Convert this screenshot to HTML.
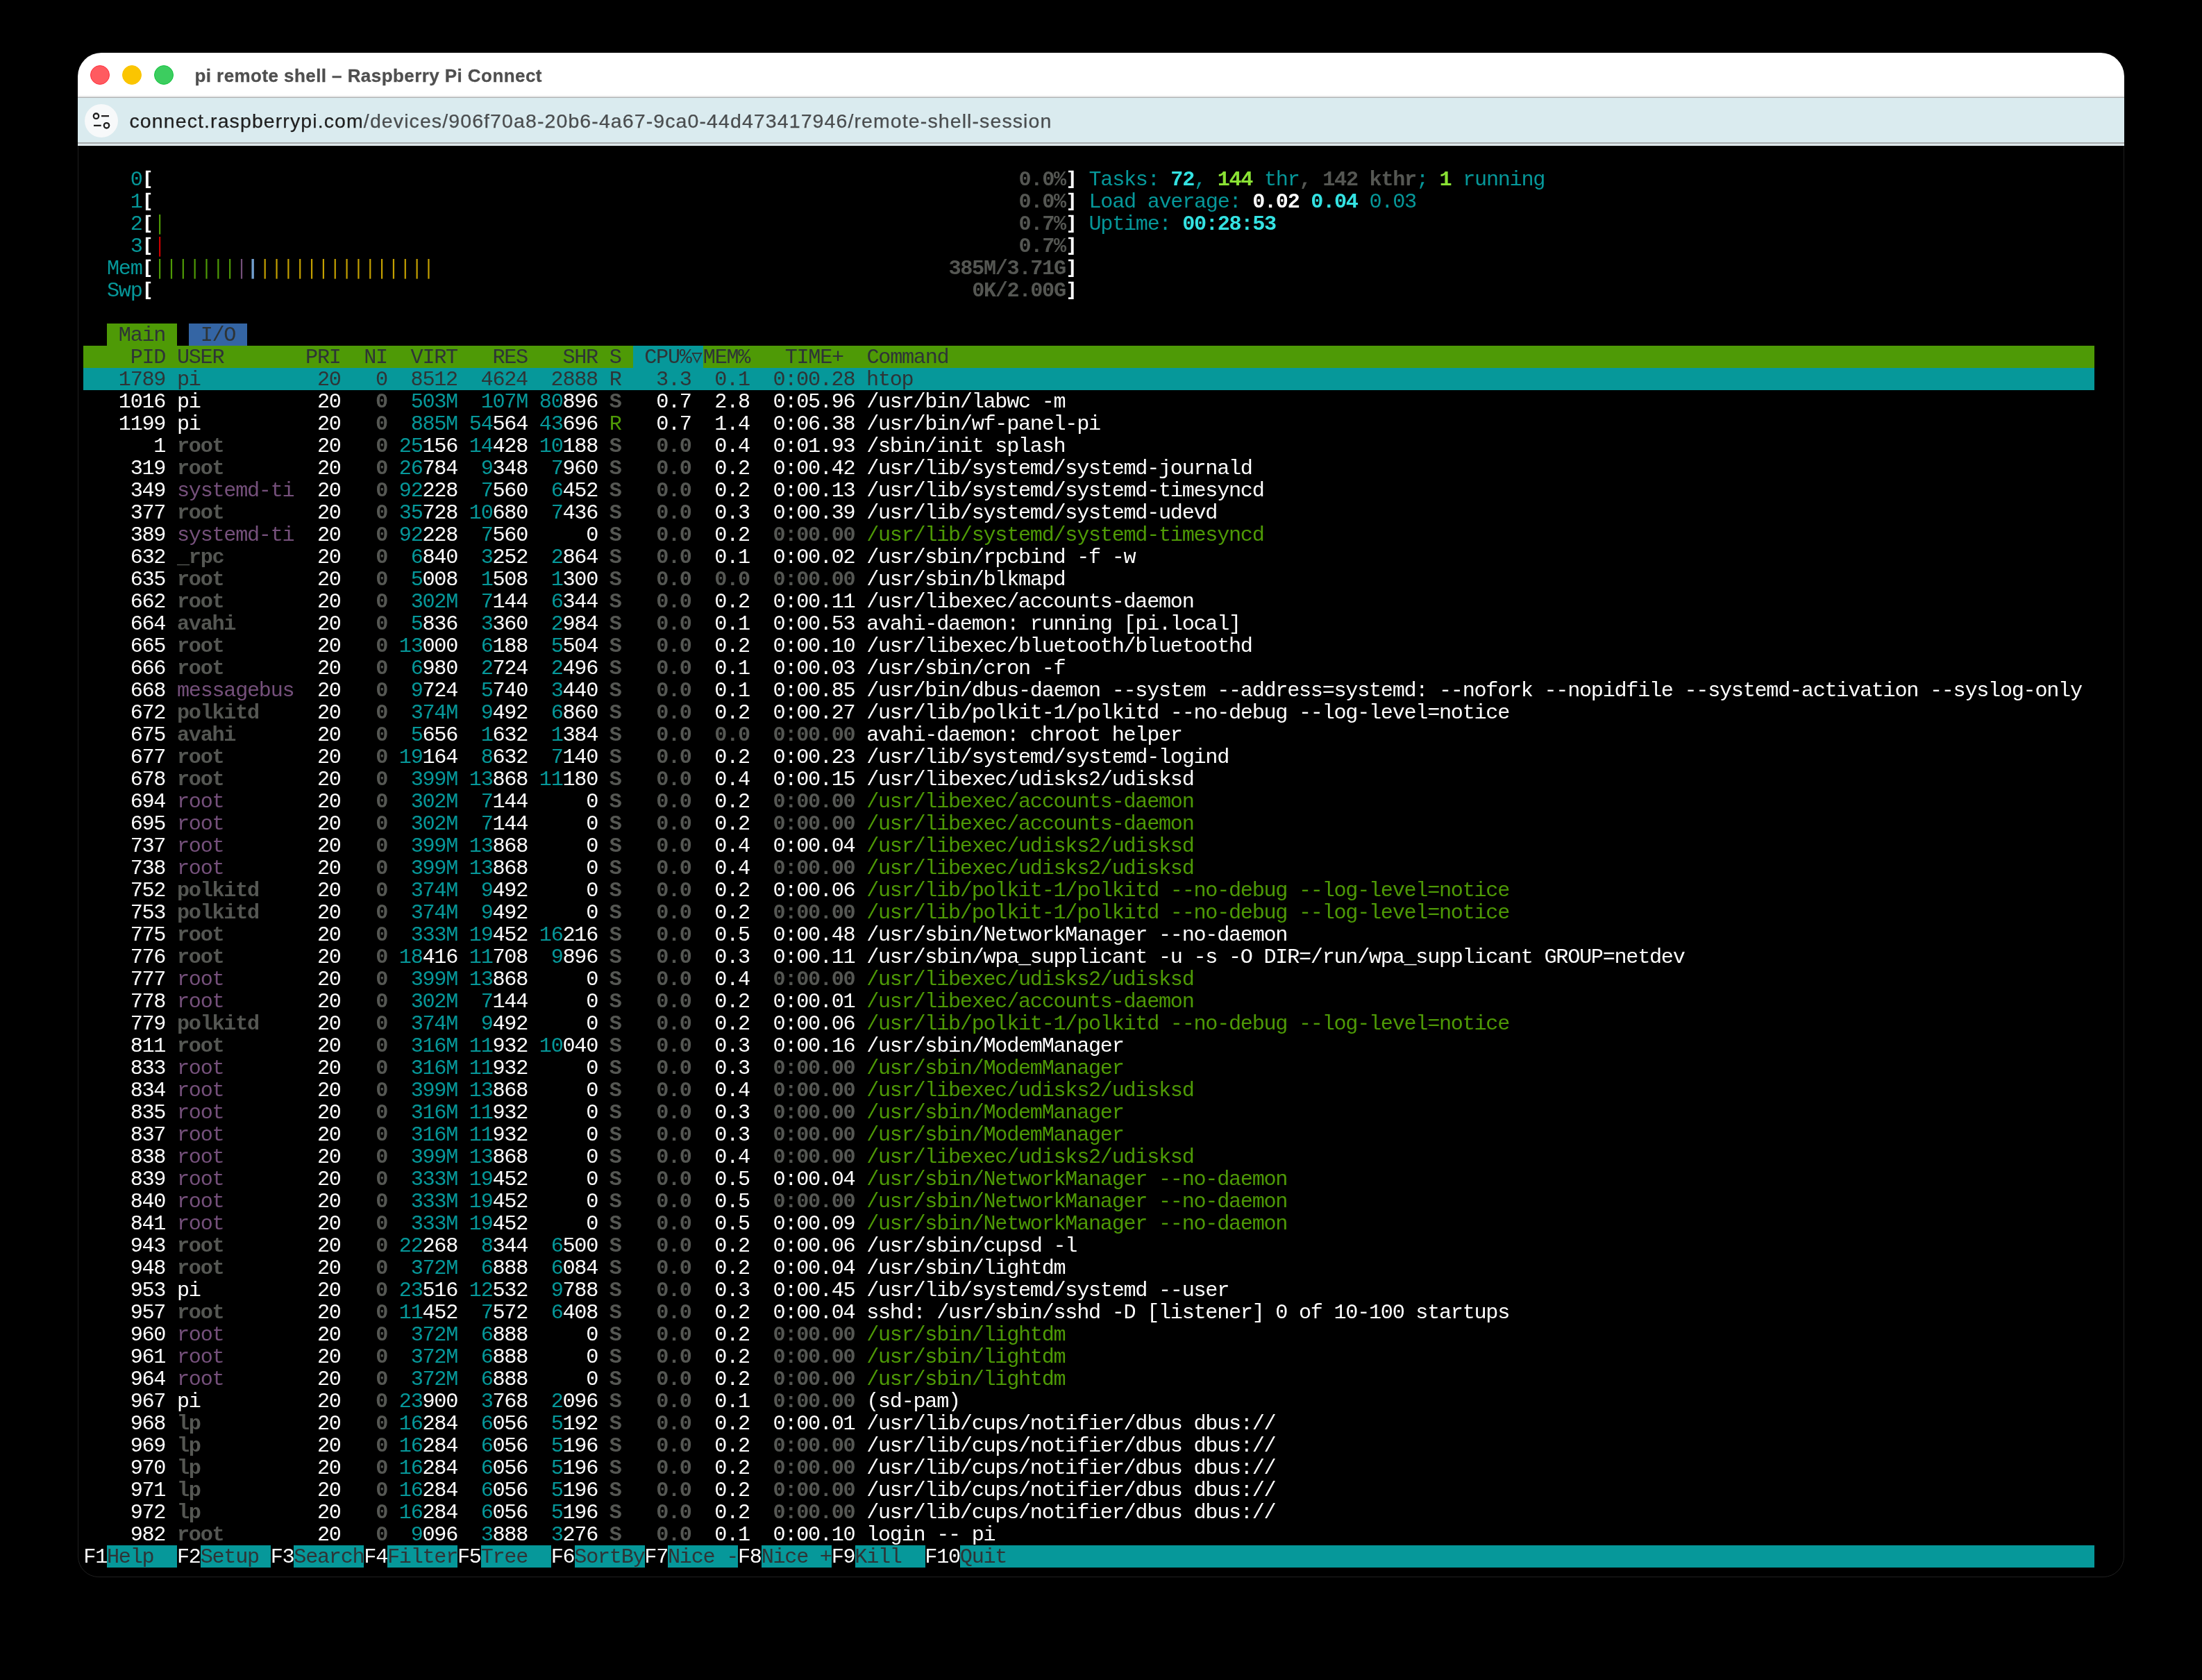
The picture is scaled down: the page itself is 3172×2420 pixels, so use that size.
<!DOCTYPE html>
<html lang="en">
<head>
<meta charset="utf-8">
<title>pi remote shell – Raspberry Pi Connect</title>
<style>
html,body{margin:0;padding:0;background:#000;}
body{width:3172px;height:2420px;position:relative;overflow:hidden;font-family:"Liberation Sans",sans-serif;}
#win{will-change:transform;position:absolute;left:112px;top:76px;width:2948px;height:2195px;border-radius:34px 34px 30px 30px;overflow:hidden;background:#000;}
#frame{position:absolute;left:112px;top:76px;width:2946px;height:2194px;border:1px solid #202020;border-radius:34px 34px 30px 30px;pointer-events:none;clip-path:inset(134px 0 0 0);}
#tb{position:absolute;left:0;top:0;width:100%;height:62px;background:#fff;}
#tbl1{position:absolute;left:0;top:62px;width:100%;height:2px;background:#e6e6e6;}
#tbl2{position:absolute;left:0;top:64px;width:100%;height:1px;background:#a9acad;}
#ub{position:absolute;left:0;top:65px;width:100%;height:64px;background:#daebef;}
#ubl1{position:absolute;left:0;top:129px;width:100%;height:2px;background:#a8aaab;}
#ubl2{position:absolute;left:0;top:131px;width:100%;height:3px;background:linear-gradient(#dcecf0 0 33%,#dde4e6 33% 67%,#e9f2f5 67%);}
.tl{position:absolute;top:17.5px;width:28.5px;height:28.5px;border-radius:50%;box-sizing:border-box;}
#title{position:absolute;left:168.5px;top:15px;height:36px;line-height:36px;font-size:26px;font-weight:bold;color:#4f4f4f;white-space:pre;letter-spacing:0.43px;-webkit-text-stroke:0.3px;}
#ic{position:absolute;left:10px;top:73.5px;width:48px;height:48px;border-radius:50%;background:#f7f9fa;}
#url{position:absolute;left:74.5px;top:78px;height:40px;line-height:40px;font-size:28.5px;color:#4a4d4f;white-space:pre;letter-spacing:1.1px;-webkit-text-stroke:0.25px;}
#url b{font-weight:normal;color:#1f1f1f;}
.r{position:absolute;height:32px;line-height:32px;white-space:pre;font-family:"Liberation Mono",monospace;font-size:30.2px;letter-spacing:-1.2829px;color:#fff;font-kerning:none;font-variant-ligatures:none;}
#term{position:absolute;left:0;top:0;width:3172px;height:2420px;will-change:transform;}
.bg{position:absolute;height:32px;}
.bar{position:absolute;height:28px;}
.tri{position:absolute;}
.c{color:#06989a}
.bc{color:#34e2e2;font-weight:bold}
.bg_{color:#8ae234;font-weight:bold}
.bk{color:#555753;font-weight:bold}
.bw{color:#fff;font-weight:bold}
.d{color:#2e3436}
.m{color:#75507b}
.g{color:#4e9a06}
</style>
</head>
<body>
<div id="win">
<div id="tb"></div><div id="tbl1"></div><div id="tbl2"></div>
<div id="ub"></div><div id="ubl1"></div><div id="ubl2"></div>
<div class="tl" style="left:17.5px;background:#ff5b60;border:1.3px solid #ff2e3e"></div>
<div class="tl" style="left:63.5px;background:#fbc501;border:1.3px solid #fac400"></div>
<div class="tl" style="left:109.5px;background:#3ccd5f;border:1.3px solid #12c43f"></div>
<div id="title">pi remote shell – Raspberry Pi Connect</div>
<div id="ic"><svg width="48" height="48" viewBox="0 0 48 48"><g fill="none" stroke="#1f1f1f" stroke-width="2.3"><circle cx="16.5" cy="17.2" r="3.7"/><circle cx="31.5" cy="30.8" r="3.7"/><path d="M24 17.2H35M13 30.8H23.7"/></g></svg></div>
<div id="url"><b>connect.raspberrypi.com</b>/devices/906f70a8-20b6-4a67-9ca0-44d473417946/remote-shell-session</div>
</div>
<div id="frame"></div>
<div id="term">
<div class="r" style="left:120.30px;top:243px"><span class="c">    0</span></div>
<svg class="tri" style="left:204px;top:242px" width="18" height="32"><path d="M5.90 3.7H13.20V6.3H9.80V26.3H13.20V28.9H5.90Z" fill="#fff"/></svg>
<div class="r" style="left:1467.50px;top:243px"><span class="bk">0.0%</span></div>
<svg class="tri" style="left:1534px;top:242px" width="18" height="32"><path d="M12.66 3.7H4.96V6.3H8.76V26.3H4.96V28.9H12.66Z" fill="#fff"/></svg>
<div class="r" style="left:120.30px;top:275px"><span class="c">    1</span></div>
<svg class="tri" style="left:204px;top:274px" width="18" height="32"><path d="M5.90 3.7H13.20V6.3H9.80V26.3H13.20V28.9H5.90Z" fill="#fff"/></svg>
<div class="r" style="left:1467.50px;top:275px"><span class="bk">0.0%</span></div>
<svg class="tri" style="left:1534px;top:274px" width="18" height="32"><path d="M12.66 3.7H4.96V6.3H8.76V26.3H4.96V28.9H12.66Z" fill="#fff"/></svg>
<div class="r" style="left:120.30px;top:307px"><span class="c">    2</span></div>
<svg class="tri" style="left:204px;top:306px" width="18" height="32"><path d="M5.90 3.7H13.20V6.3H9.80V26.3H13.20V28.9H5.90Z" fill="#fff"/></svg>
<svg class="tri" style="left:221px;top:306px" width="20" height="32"><rect x="8.04" y="3" width="2.2" height="28.6" fill="#4e9a06"/></svg>
<div class="r" style="left:1467.50px;top:307px"><span class="bk">0.7%</span></div>
<svg class="tri" style="left:1534px;top:306px" width="18" height="32"><path d="M12.66 3.7H4.96V6.3H8.76V26.3H4.96V28.9H12.66Z" fill="#fff"/></svg>
<div class="r" style="left:120.30px;top:339px"><span class="c">    3</span></div>
<svg class="tri" style="left:204px;top:338px" width="18" height="32"><path d="M5.90 3.7H13.20V6.3H9.80V26.3H13.20V28.9H5.90Z" fill="#fff"/></svg>
<svg class="tri" style="left:221px;top:338px" width="20" height="32"><rect x="8.04" y="3" width="2.2" height="28.6" fill="#cc0000"/></svg>
<div class="r" style="left:1467.50px;top:339px"><span class="bk">0.7%</span></div>
<svg class="tri" style="left:1534px;top:338px" width="18" height="32"><path d="M12.66 3.7H4.96V6.3H8.76V26.3H4.96V28.9H12.66Z" fill="#fff"/></svg>
<div class="r" style="left:120.30px;top:371px"><span class="c">  Mem</span></div>
<svg class="tri" style="left:204px;top:370px" width="18" height="32"><path d="M5.90 3.7H13.20V6.3H9.80V26.3H13.20V28.9H5.90Z" fill="#fff"/></svg>
<svg class="tri" style="left:221px;top:370px" width="408" height="32"><rect x="8.04" y="3" width="2.2" height="28.6" fill="#4e9a06"/><rect x="24.88" y="3" width="2.2" height="28.6" fill="#4e9a06"/><rect x="41.72" y="3" width="2.2" height="28.6" fill="#4e9a06"/><rect x="58.56" y="3" width="2.2" height="28.6" fill="#4e9a06"/><rect x="75.40" y="3" width="2.2" height="28.6" fill="#4e9a06"/><rect x="92.24" y="3" width="2.2" height="28.6" fill="#4e9a06"/><rect x="109.08" y="3" width="2.2" height="28.6" fill="#4e9a06"/><rect x="125.92" y="3" width="2.2" height="28.6" fill="#75507b"/><rect x="141.46" y="3" width="3.4" height="28.6" fill="#729fcf"/><rect x="159.60" y="3" width="2.2" height="28.6" fill="#c4a000"/><rect x="176.44" y="3" width="2.2" height="28.6" fill="#c4a000"/><rect x="193.28" y="3" width="2.2" height="28.6" fill="#c4a000"/><rect x="210.12" y="3" width="2.2" height="28.6" fill="#c4a000"/><rect x="226.96" y="3" width="2.2" height="28.6" fill="#c4a000"/><rect x="243.80" y="3" width="2.2" height="28.6" fill="#c4a000"/><rect x="260.64" y="3" width="2.2" height="28.6" fill="#c4a000"/><rect x="277.48" y="3" width="2.2" height="28.6" fill="#c4a000"/><rect x="294.32" y="3" width="2.2" height="28.6" fill="#c4a000"/><rect x="311.16" y="3" width="2.2" height="28.6" fill="#c4a000"/><rect x="328.00" y="3" width="2.2" height="28.6" fill="#c4a000"/><rect x="344.84" y="3" width="2.2" height="28.6" fill="#c4a000"/><rect x="361.68" y="3" width="2.2" height="28.6" fill="#c4a000"/><rect x="378.52" y="3" width="2.2" height="28.6" fill="#c4a000"/><rect x="395.36" y="3" width="2.2" height="28.6" fill="#c4a000"/></svg>
<div class="r" style="left:1366.46px;top:371px"><span class="bk">385M/3.71G</span></div>
<svg class="tri" style="left:1534px;top:370px" width="18" height="32"><path d="M12.66 3.7H4.96V6.3H8.76V26.3H4.96V28.9H12.66Z" fill="#fff"/></svg>
<div class="r" style="left:120.30px;top:403px"><span class="c">  Swp</span></div>
<svg class="tri" style="left:204px;top:402px" width="18" height="32"><path d="M5.90 3.7H13.20V6.3H9.80V26.3H13.20V28.9H5.90Z" fill="#fff"/></svg>
<div class="r" style="left:1400.14px;top:403px"><span class="bk">0K/2.00G</span></div>
<svg class="tri" style="left:1534px;top:402px" width="18" height="32"><path d="M12.66 3.7H4.96V6.3H8.76V26.3H4.96V28.9H12.66Z" fill="#fff"/></svg>
<div class="r" style="left:1568.54px;top:243px"><span class="c">Tasks: </span><span class="bc">72</span><span class="c">, </span><span class="bg_">144</span><span class="c"> thr</span><span class="bk">, </span><span class="bk">142</span><span class="bk"> kthr</span><span class="c">; </span><span class="bg_">1</span><span class="c"> running</span></div>
<div class="r" style="left:1568.54px;top:275px"><span class="c">Load average: </span><span class="bw">0.02 </span><span class="bc">0.04 </span><span class="c">0.03</span></div>
<div class="r" style="left:1568.54px;top:307px"><span class="c">Uptime: </span><span class="bc">00:28:53</span></div>
<div class="bg" style="left:153.98px;top:466px;width:101.04px;background:#4e9a06;"></div>
<div class="bg" style="left:271.86px;top:466px;width:84.20px;background:#3465a4;"></div>
<div class="r" style="left:153.98px;top:467px"><span class="d"> Main </span></div>
<div class="r" style="left:271.86px;top:467px"><span class="d"> I/O </span></div>
<div class="bg" style="left:120.30px;top:498px;width:2896.48px;background:#4e9a06;"></div>
<div class="bg" style="left:911.78px;top:498px;width:101.04px;background:#06989a;"></div>
<div class="r" style="left:120.30px;top:499px"><span class="d">    PID USER       PRI  NI  VIRT   RES   SHR S  CPU%</span></div>
<div class="r" style="left:1012.82px;top:499px"><span class="d">MEM%   TIME+  Command</span></div>
<svg class="tri" style="left:996.28px;top:507px" width="16" height="17" viewBox="0 0 16 17"><path d="M1.6 1.9 L14.4 1.9 L8 14.6 Z" fill="none" stroke="#2e3436" stroke-width="1.7" stroke-linejoin="miter"/></svg>
<div class="bg" style="left:120.30px;top:530px;width:2896.48px;background:#06989a;"></div>
<div class="r" style="left:120.30px;top:531px"><span class="d">   1789 pi          20   0  8512  4624  2888 R   3.3  0.1  0:00.28 htop</span></div>
<div class="r" style="left:120.30px;top:563px">   1016 pi          20 <span class="bk">  0</span>  <span class="c">503M</span>  <span class="c">107M</span> <span class="c">80</span>896 <span class="bk">S</span>   0.7  2.8  0:05.96 /usr/bin/labwc -m</div>
<div class="r" style="left:120.30px;top:595px">   1199 pi          20 <span class="bk">  0</span>  <span class="c">885M</span> <span class="c">54</span>564 <span class="c">43</span>696 <span class="g">R</span>   0.7  1.4  0:06.38 /usr/bin/wf-panel-pi</div>
<div class="r" style="left:120.30px;top:627px">      1 <span class="bk">root      </span>  20 <span class="bk">  0</span> <span class="c">25</span>156 <span class="c">14</span>428 <span class="c">10</span>188 <span class="bk">S</span><span class="bk">   0.0</span>  0.4  0:01.93 /sbin/init splash</div>
<div class="r" style="left:120.30px;top:659px">    319 <span class="bk">root      </span>  20 <span class="bk">  0</span> <span class="c">26</span>784  <span class="c">9</span>348  <span class="c">7</span>960 <span class="bk">S</span><span class="bk">   0.0</span>  0.2  0:00.42 /usr/lib/systemd/systemd-journald</div>
<div class="r" style="left:120.30px;top:691px">    349 <span class="m">systemd-ti</span>  20 <span class="bk">  0</span> <span class="c">92</span>228  <span class="c">7</span>560  <span class="c">6</span>452 <span class="bk">S</span><span class="bk">   0.0</span>  0.2  0:00.13 /usr/lib/systemd/systemd-timesyncd</div>
<div class="r" style="left:120.30px;top:723px">    377 <span class="bk">root      </span>  20 <span class="bk">  0</span> <span class="c">35</span>728 <span class="c">10</span>680  <span class="c">7</span>436 <span class="bk">S</span><span class="bk">   0.0</span>  0.3  0:00.39 /usr/lib/systemd/systemd-udevd</div>
<div class="r" style="left:120.30px;top:755px">    389 <span class="m">systemd-ti</span>  20 <span class="bk">  0</span> <span class="c">92</span>228  <span class="c">7</span>560     0 <span class="bk">S</span><span class="bk">   0.0</span>  0.2<span class="bk">  0:00.00 </span><span class="g">/usr/lib/systemd/systemd-timesyncd</span></div>
<div class="r" style="left:120.30px;top:787px">    632 <span class="bk">_rpc      </span>  20 <span class="bk">  0</span>  <span class="c">6</span>840  <span class="c">3</span>252  <span class="c">2</span>864 <span class="bk">S</span><span class="bk">   0.0</span>  0.1  0:00.02 /usr/sbin/rpcbind -f -w</div>
<div class="r" style="left:120.30px;top:819px">    635 <span class="bk">root      </span>  20 <span class="bk">  0</span>  <span class="c">5</span>008  <span class="c">1</span>508  <span class="c">1</span>300 <span class="bk">S</span><span class="bk">   0.0</span><span class="bk">  0.0</span><span class="bk">  0:00.00 </span>/usr/sbin/blkmapd</div>
<div class="r" style="left:120.30px;top:851px">    662 <span class="bk">root      </span>  20 <span class="bk">  0</span>  <span class="c">302M</span>  <span class="c">7</span>144  <span class="c">6</span>344 <span class="bk">S</span><span class="bk">   0.0</span>  0.2  0:00.11 /usr/libexec/accounts-daemon</div>
<div class="r" style="left:120.30px;top:883px">    664 <span class="bk">avahi     </span>  20 <span class="bk">  0</span>  <span class="c">5</span>836  <span class="c">3</span>360  <span class="c">2</span>984 <span class="bk">S</span><span class="bk">   0.0</span>  0.1  0:00.53 avahi-daemon: running [pi.local]</div>
<div class="r" style="left:120.30px;top:915px">    665 <span class="bk">root      </span>  20 <span class="bk">  0</span> <span class="c">13</span>000  <span class="c">6</span>188  <span class="c">5</span>504 <span class="bk">S</span><span class="bk">   0.0</span>  0.2  0:00.10 /usr/libexec/bluetooth/bluetoothd</div>
<div class="r" style="left:120.30px;top:947px">    666 <span class="bk">root      </span>  20 <span class="bk">  0</span>  <span class="c">6</span>980  <span class="c">2</span>724  <span class="c">2</span>496 <span class="bk">S</span><span class="bk">   0.0</span>  0.1  0:00.03 /usr/sbin/cron -f</div>
<div class="r" style="left:120.30px;top:979px">    668 <span class="m">messagebus</span>  20 <span class="bk">  0</span>  <span class="c">9</span>724  <span class="c">5</span>740  <span class="c">3</span>440 <span class="bk">S</span><span class="bk">   0.0</span>  0.1  0:00.85 /usr/bin/dbus-daemon --system --address=systemd: --nofork --nopidfile --systemd-activation --syslog-only</div>
<div class="r" style="left:120.30px;top:1011px">    672 <span class="bk">polkitd   </span>  20 <span class="bk">  0</span>  <span class="c">374M</span>  <span class="c">9</span>492  <span class="c">6</span>860 <span class="bk">S</span><span class="bk">   0.0</span>  0.2  0:00.27 /usr/lib/polkit-1/polkitd --no-debug --log-level=notice</div>
<div class="r" style="left:120.30px;top:1043px">    675 <span class="bk">avahi     </span>  20 <span class="bk">  0</span>  <span class="c">5</span>656  <span class="c">1</span>632  <span class="c">1</span>384 <span class="bk">S</span><span class="bk">   0.0</span><span class="bk">  0.0</span><span class="bk">  0:00.00 </span>avahi-daemon: chroot helper</div>
<div class="r" style="left:120.30px;top:1075px">    677 <span class="bk">root      </span>  20 <span class="bk">  0</span> <span class="c">19</span>164  <span class="c">8</span>632  <span class="c">7</span>140 <span class="bk">S</span><span class="bk">   0.0</span>  0.2  0:00.23 /usr/lib/systemd/systemd-logind</div>
<div class="r" style="left:120.30px;top:1107px">    678 <span class="bk">root      </span>  20 <span class="bk">  0</span>  <span class="c">399M</span> <span class="c">13</span>868 <span class="c">11</span>180 <span class="bk">S</span><span class="bk">   0.0</span>  0.4  0:00.15 /usr/libexec/udisks2/udisksd</div>
<div class="r" style="left:120.30px;top:1139px">    694 <span class="m">root      </span>  20 <span class="bk">  0</span>  <span class="c">302M</span>  <span class="c">7</span>144     0 <span class="bk">S</span><span class="bk">   0.0</span>  0.2<span class="bk">  0:00.00 </span><span class="g">/usr/libexec/accounts-daemon</span></div>
<div class="r" style="left:120.30px;top:1171px">    695 <span class="m">root      </span>  20 <span class="bk">  0</span>  <span class="c">302M</span>  <span class="c">7</span>144     0 <span class="bk">S</span><span class="bk">   0.0</span>  0.2<span class="bk">  0:00.00 </span><span class="g">/usr/libexec/accounts-daemon</span></div>
<div class="r" style="left:120.30px;top:1203px">    737 <span class="m">root      </span>  20 <span class="bk">  0</span>  <span class="c">399M</span> <span class="c">13</span>868     0 <span class="bk">S</span><span class="bk">   0.0</span>  0.4  0:00.04 <span class="g">/usr/libexec/udisks2/udisksd</span></div>
<div class="r" style="left:120.30px;top:1235px">    738 <span class="m">root      </span>  20 <span class="bk">  0</span>  <span class="c">399M</span> <span class="c">13</span>868     0 <span class="bk">S</span><span class="bk">   0.0</span>  0.4<span class="bk">  0:00.00 </span><span class="g">/usr/libexec/udisks2/udisksd</span></div>
<div class="r" style="left:120.30px;top:1267px">    752 <span class="bk">polkitd   </span>  20 <span class="bk">  0</span>  <span class="c">374M</span>  <span class="c">9</span>492     0 <span class="bk">S</span><span class="bk">   0.0</span>  0.2  0:00.06 <span class="g">/usr/lib/polkit-1/polkitd --no-debug --log-level=notice</span></div>
<div class="r" style="left:120.30px;top:1299px">    753 <span class="bk">polkitd   </span>  20 <span class="bk">  0</span>  <span class="c">374M</span>  <span class="c">9</span>492     0 <span class="bk">S</span><span class="bk">   0.0</span>  0.2<span class="bk">  0:00.00 </span><span class="g">/usr/lib/polkit-1/polkitd --no-debug --log-level=notice</span></div>
<div class="r" style="left:120.30px;top:1331px">    775 <span class="bk">root      </span>  20 <span class="bk">  0</span>  <span class="c">333M</span> <span class="c">19</span>452 <span class="c">16</span>216 <span class="bk">S</span><span class="bk">   0.0</span>  0.5  0:00.48 /usr/sbin/NetworkManager --no-daemon</div>
<div class="r" style="left:120.30px;top:1363px">    776 <span class="bk">root      </span>  20 <span class="bk">  0</span> <span class="c">18</span>416 <span class="c">11</span>708  <span class="c">9</span>896 <span class="bk">S</span><span class="bk">   0.0</span>  0.3  0:00.11 /usr/sbin/wpa_supplicant -u -s -O DIR=/run/wpa_supplicant GROUP=netdev</div>
<div class="r" style="left:120.30px;top:1395px">    777 <span class="m">root      </span>  20 <span class="bk">  0</span>  <span class="c">399M</span> <span class="c">13</span>868     0 <span class="bk">S</span><span class="bk">   0.0</span>  0.4<span class="bk">  0:00.00 </span><span class="g">/usr/libexec/udisks2/udisksd</span></div>
<div class="r" style="left:120.30px;top:1427px">    778 <span class="m">root      </span>  20 <span class="bk">  0</span>  <span class="c">302M</span>  <span class="c">7</span>144     0 <span class="bk">S</span><span class="bk">   0.0</span>  0.2  0:00.01 <span class="g">/usr/libexec/accounts-daemon</span></div>
<div class="r" style="left:120.30px;top:1459px">    779 <span class="bk">polkitd   </span>  20 <span class="bk">  0</span>  <span class="c">374M</span>  <span class="c">9</span>492     0 <span class="bk">S</span><span class="bk">   0.0</span>  0.2  0:00.06 <span class="g">/usr/lib/polkit-1/polkitd --no-debug --log-level=notice</span></div>
<div class="r" style="left:120.30px;top:1491px">    811 <span class="bk">root      </span>  20 <span class="bk">  0</span>  <span class="c">316M</span> <span class="c">11</span>932 <span class="c">10</span>040 <span class="bk">S</span><span class="bk">   0.0</span>  0.3  0:00.16 /usr/sbin/ModemManager</div>
<div class="r" style="left:120.30px;top:1523px">    833 <span class="m">root      </span>  20 <span class="bk">  0</span>  <span class="c">316M</span> <span class="c">11</span>932     0 <span class="bk">S</span><span class="bk">   0.0</span>  0.3<span class="bk">  0:00.00 </span><span class="g">/usr/sbin/ModemManager</span></div>
<div class="r" style="left:120.30px;top:1555px">    834 <span class="m">root      </span>  20 <span class="bk">  0</span>  <span class="c">399M</span> <span class="c">13</span>868     0 <span class="bk">S</span><span class="bk">   0.0</span>  0.4<span class="bk">  0:00.00 </span><span class="g">/usr/libexec/udisks2/udisksd</span></div>
<div class="r" style="left:120.30px;top:1587px">    835 <span class="m">root      </span>  20 <span class="bk">  0</span>  <span class="c">316M</span> <span class="c">11</span>932     0 <span class="bk">S</span><span class="bk">   0.0</span>  0.3<span class="bk">  0:00.00 </span><span class="g">/usr/sbin/ModemManager</span></div>
<div class="r" style="left:120.30px;top:1619px">    837 <span class="m">root      </span>  20 <span class="bk">  0</span>  <span class="c">316M</span> <span class="c">11</span>932     0 <span class="bk">S</span><span class="bk">   0.0</span>  0.3<span class="bk">  0:00.00 </span><span class="g">/usr/sbin/ModemManager</span></div>
<div class="r" style="left:120.30px;top:1651px">    838 <span class="m">root      </span>  20 <span class="bk">  0</span>  <span class="c">399M</span> <span class="c">13</span>868     0 <span class="bk">S</span><span class="bk">   0.0</span>  0.4<span class="bk">  0:00.00 </span><span class="g">/usr/libexec/udisks2/udisksd</span></div>
<div class="r" style="left:120.30px;top:1683px">    839 <span class="m">root      </span>  20 <span class="bk">  0</span>  <span class="c">333M</span> <span class="c">19</span>452     0 <span class="bk">S</span><span class="bk">   0.0</span>  0.5  0:00.04 <span class="g">/usr/sbin/NetworkManager --no-daemon</span></div>
<div class="r" style="left:120.30px;top:1715px">    840 <span class="m">root      </span>  20 <span class="bk">  0</span>  <span class="c">333M</span> <span class="c">19</span>452     0 <span class="bk">S</span><span class="bk">   0.0</span>  0.5<span class="bk">  0:00.00 </span><span class="g">/usr/sbin/NetworkManager --no-daemon</span></div>
<div class="r" style="left:120.30px;top:1747px">    841 <span class="m">root      </span>  20 <span class="bk">  0</span>  <span class="c">333M</span> <span class="c">19</span>452     0 <span class="bk">S</span><span class="bk">   0.0</span>  0.5  0:00.09 <span class="g">/usr/sbin/NetworkManager --no-daemon</span></div>
<div class="r" style="left:120.30px;top:1779px">    943 <span class="bk">root      </span>  20 <span class="bk">  0</span> <span class="c">22</span>268  <span class="c">8</span>344  <span class="c">6</span>500 <span class="bk">S</span><span class="bk">   0.0</span>  0.2  0:00.06 /usr/sbin/cupsd -l</div>
<div class="r" style="left:120.30px;top:1811px">    948 <span class="bk">root      </span>  20 <span class="bk">  0</span>  <span class="c">372M</span>  <span class="c">6</span>888  <span class="c">6</span>084 <span class="bk">S</span><span class="bk">   0.0</span>  0.2  0:00.04 /usr/sbin/lightdm</div>
<div class="r" style="left:120.30px;top:1843px">    953 pi          20 <span class="bk">  0</span> <span class="c">23</span>516 <span class="c">12</span>532  <span class="c">9</span>788 <span class="bk">S</span><span class="bk">   0.0</span>  0.3  0:00.45 /usr/lib/systemd/systemd --user</div>
<div class="r" style="left:120.30px;top:1875px">    957 <span class="bk">root      </span>  20 <span class="bk">  0</span> <span class="c">11</span>452  <span class="c">7</span>572  <span class="c">6</span>408 <span class="bk">S</span><span class="bk">   0.0</span>  0.2  0:00.04 sshd: /usr/sbin/sshd -D [listener] 0 of 10-100 startups</div>
<div class="r" style="left:120.30px;top:1907px">    960 <span class="m">root      </span>  20 <span class="bk">  0</span>  <span class="c">372M</span>  <span class="c">6</span>888     0 <span class="bk">S</span><span class="bk">   0.0</span>  0.2<span class="bk">  0:00.00 </span><span class="g">/usr/sbin/lightdm</span></div>
<div class="r" style="left:120.30px;top:1939px">    961 <span class="m">root      </span>  20 <span class="bk">  0</span>  <span class="c">372M</span>  <span class="c">6</span>888     0 <span class="bk">S</span><span class="bk">   0.0</span>  0.2<span class="bk">  0:00.00 </span><span class="g">/usr/sbin/lightdm</span></div>
<div class="r" style="left:120.30px;top:1971px">    964 <span class="m">root      </span>  20 <span class="bk">  0</span>  <span class="c">372M</span>  <span class="c">6</span>888     0 <span class="bk">S</span><span class="bk">   0.0</span>  0.2<span class="bk">  0:00.00 </span><span class="g">/usr/sbin/lightdm</span></div>
<div class="r" style="left:120.30px;top:2003px">    967 pi          20 <span class="bk">  0</span> <span class="c">23</span>900  <span class="c">3</span>768  <span class="c">2</span>096 <span class="bk">S</span><span class="bk">   0.0</span>  0.1<span class="bk">  0:00.00 </span>(sd-pam)</div>
<div class="r" style="left:120.30px;top:2035px">    968 <span class="bk">lp        </span>  20 <span class="bk">  0</span> <span class="c">16</span>284  <span class="c">6</span>056  <span class="c">5</span>192 <span class="bk">S</span><span class="bk">   0.0</span>  0.2  0:00.01 /usr/lib/cups/notifier/dbus dbus://</div>
<div class="r" style="left:120.30px;top:2067px">    969 <span class="bk">lp        </span>  20 <span class="bk">  0</span> <span class="c">16</span>284  <span class="c">6</span>056  <span class="c">5</span>196 <span class="bk">S</span><span class="bk">   0.0</span>  0.2<span class="bk">  0:00.00 </span>/usr/lib/cups/notifier/dbus dbus://</div>
<div class="r" style="left:120.30px;top:2099px">    970 <span class="bk">lp        </span>  20 <span class="bk">  0</span> <span class="c">16</span>284  <span class="c">6</span>056  <span class="c">5</span>196 <span class="bk">S</span><span class="bk">   0.0</span>  0.2<span class="bk">  0:00.00 </span>/usr/lib/cups/notifier/dbus dbus://</div>
<div class="r" style="left:120.30px;top:2131px">    971 <span class="bk">lp        </span>  20 <span class="bk">  0</span> <span class="c">16</span>284  <span class="c">6</span>056  <span class="c">5</span>196 <span class="bk">S</span><span class="bk">   0.0</span>  0.2<span class="bk">  0:00.00 </span>/usr/lib/cups/notifier/dbus dbus://</div>
<div class="r" style="left:120.30px;top:2163px">    972 <span class="bk">lp        </span>  20 <span class="bk">  0</span> <span class="c">16</span>284  <span class="c">6</span>056  <span class="c">5</span>196 <span class="bk">S</span><span class="bk">   0.0</span>  0.2<span class="bk">  0:00.00 </span>/usr/lib/cups/notifier/dbus dbus://</div>
<div class="r" style="left:120.30px;top:2195px">    982 <span class="bk">root      </span>  20 <span class="bk">  0</span>  <span class="c">9</span>096  <span class="c">3</span>888  <span class="c">3</span>276 <span class="bk">S</span><span class="bk">   0.0</span>  0.1  0:00.10 login -- pi</div>
<div class="bg" style="left:153.98px;top:2226px;width:101.04px;background:#06989a;"></div>
<div class="bg" style="left:288.70px;top:2226px;width:101.04px;background:#06989a;"></div>
<div class="bg" style="left:423.42px;top:2226px;width:101.04px;background:#06989a;"></div>
<div class="bg" style="left:558.14px;top:2226px;width:101.04px;background:#06989a;"></div>
<div class="bg" style="left:692.86px;top:2226px;width:101.04px;background:#06989a;"></div>
<div class="bg" style="left:827.58px;top:2226px;width:101.04px;background:#06989a;"></div>
<div class="bg" style="left:962.30px;top:2226px;width:101.04px;background:#06989a;"></div>
<div class="bg" style="left:1097.02px;top:2226px;width:101.04px;background:#06989a;"></div>
<div class="bg" style="left:1231.74px;top:2226px;width:101.04px;background:#06989a;"></div>
<div class="bg" style="left:1383.30px;top:2226px;width:1633.48px;background:#06989a;"></div>
<div class="r" style="left:120.30px;top:2227px">F1<span class="d">Help  </span>F2<span class="d">Setup </span>F3<span class="d">Search</span>F4<span class="d">Filter</span>F5<span class="d">Tree  </span>F6<span class="d">SortBy</span>F7<span class="d">Nice -</span>F8<span class="d">Nice +</span>F9<span class="d">Kill  </span>F10<span class="d">Quit</span></div>
</div>
</body>
</html>
